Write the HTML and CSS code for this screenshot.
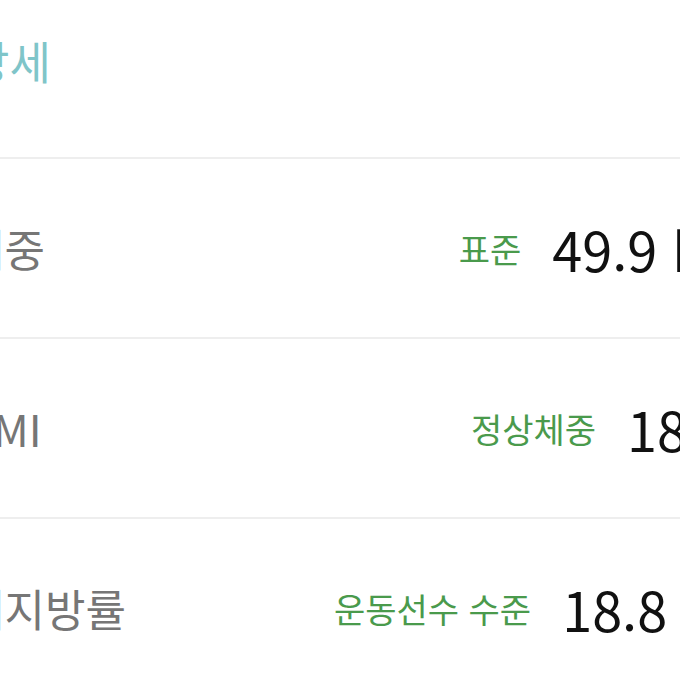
FILE: index.html
```html
<!DOCTYPE html>
<html lang="ko">
<head>
<meta charset="utf-8">
<link rel="stylesheet" href="styles.css">
</head>
<body>
<div class="page">
  <div class="title">상세</div>
  <div class="row">
    <div class="label">체중</div>
    <div class="right">
      <span class="status">표준</span>
      <span class="value">49.9 kg</span>
    </div>
  </div>
  <div class="row">
    <div class="label">BMI</div>
    <div class="right">
      <span class="status">정상체중</span>
      <span class="value">18.5</span>
    </div>
  </div>
  <div class="row">
    <div class="label">체지방률</div>
    <div class="right">
      <span class="status">운동선수 수준</span>
      <span class="value">18.8 %</span>
    </div>
  </div>
</div>
</body>
</html>
```

FILE: styles.css
```css
html, body {
  margin: 0;
  padding: 0;
  background: #ffffff;
  overflow: hidden;
}
body {
  width: 680px;
  height: 680px;
  font-family: "Noto Sans CJK KR", "Noto Sans", sans-serif;
}
.page {
  margin-left: -36px;
  width: 768px;
}
.title {
  height: 157px;
  box-sizing: border-box;
  padding-top: 38px;
  padding-left: 4px;
  font-size: 45px;
  line-height: 45px;
  color: #7fc5c9;
}
.row {
  height: 178px;
  border-top: 2px solid #eeeeee;
  display: flex;
  align-items: center;
  justify-content: space-between;
}
.label {
  font-size: 44px;
  color: #767676;
}
.right {
  display: flex;
  align-items: center;
}
.status {
  font-size: 34px;
  color: #4a9a4c;
  margin-right: 31px;
}
.value {
  font-size: 54px;
  color: #111111;
}
```
